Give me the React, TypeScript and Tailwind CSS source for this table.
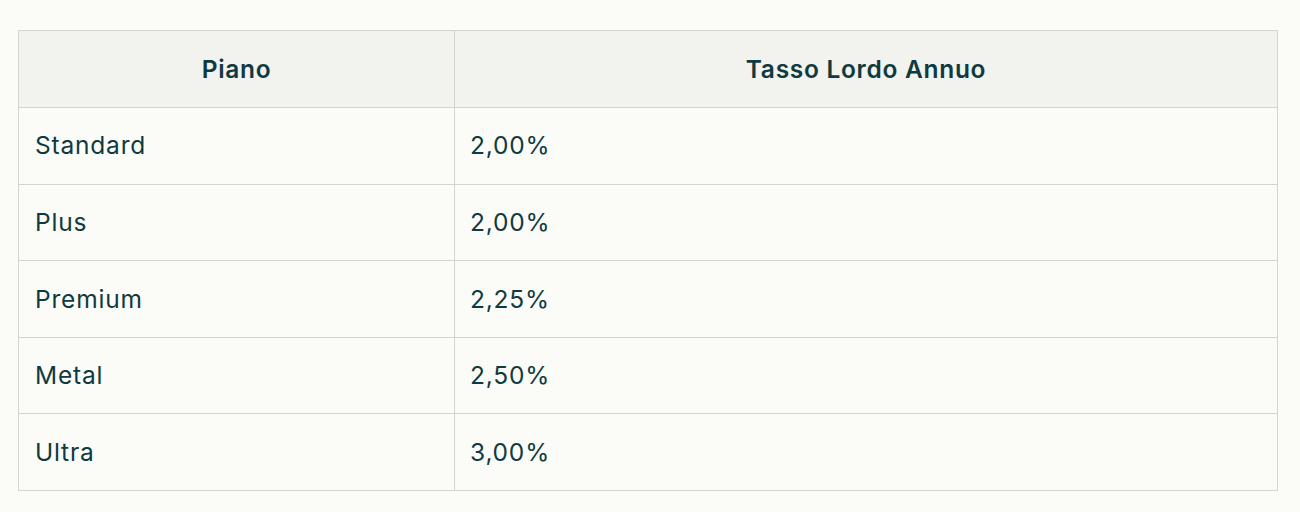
import React from "react";

const rows: [string, string][] = [
  ["Standard", "2,00%"],
  ["Plus", "2,00%"],
  ["Premium", "2,25%"],
  ["Metal", "2,50%"],
  ["Ultra", "3,00%"],
];

export default function App() {
  return (
    <div
      className="w-[1300px] h-[512px] bg-[#fbfbf8] pt-[30px] pl-[18px] text-[#0f3a40]"
      style={{ fontFamily: "Inter, 'Liberation Sans', sans-serif" }}
    >
      <table className="w-[1260px] border-collapse table-fixed">
        <colgroup>
          <col className="w-[436px]" />
          <col />
        </colgroup>
        <thead>
          <tr className="bg-[#f2f2ef] h-[77px]">
            <th className="border border-[#d4d4cd] text-[24.5px] tracking-[0.7px] font-semibold text-center px-4">Piano</th>
            <th className="border border-[#d4d4cd] text-[24.5px] tracking-[0.7px] font-semibold text-center px-4">Tasso Lordo Annuo</th>
          </tr>
        </thead>
        <tbody>
          {rows.map(([a, b]) => (
            <tr key={a} className="h-[76.6px]">
              <td className="border border-[#d4d4cd] text-[24.5px] tracking-[0.8px] pl-4 pr-4">{a}</td>
              <td className="border border-[#d4d4cd] text-[24.5px] tracking-[0.8px] pl-[15px] pr-4">{b}</td>
            </tr>
          ))}
        </tbody>
      </table>
    </div>
  );
}
